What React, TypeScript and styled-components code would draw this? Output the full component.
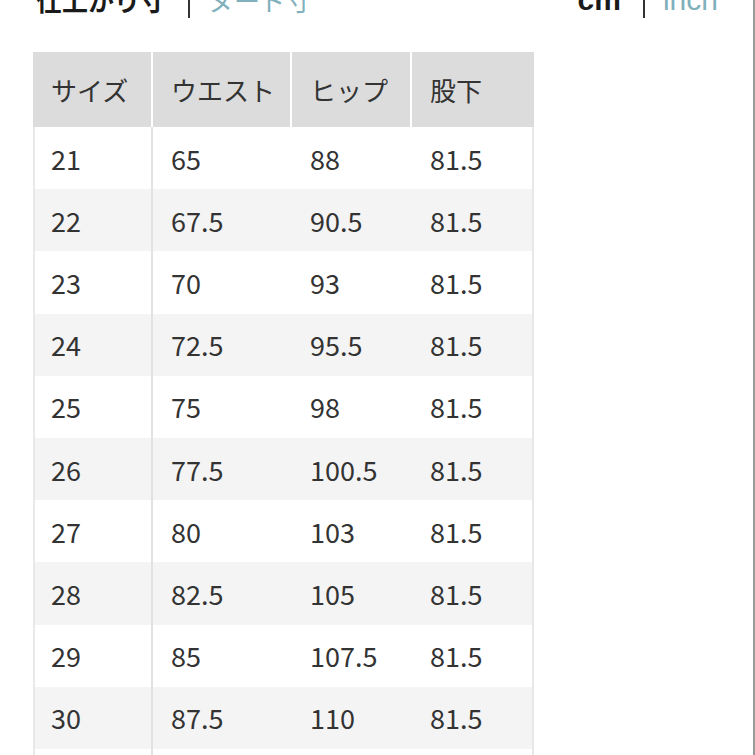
import styled, { createGlobalStyle } from "styled-components";

const GlobalStyle = createGlobalStyle`
  html, body {
    margin: 0;
    padding: 0;
    background: #ffffff;
    overflow: hidden;
  }
  body {
    font-family: "Noto Sans CJK JP", "Noto Sans", sans-serif;
    color: #333333;
  }
`;

const rows = [
  ["21", "65", "88", "81.5"],
  ["22", "67.5", "90.5", "81.5"],
  ["23", "70", "93", "81.5"],
  ["24", "72.5", "95.5", "81.5"],
  ["25", "75", "98", "81.5"],
  ["26", "77.5", "100.5", "81.5"],
  ["27", "80", "103", "81.5"],
  ["28", "82.5", "105", "81.5"],
  ["29", "85", "107.5", "81.5"],
  ["30", "87.5", "110", "81.5"],
  ["31", "90", "112.5", "81.5"],
];

const headers = ["サイズ", "ウエスト", "ヒップ", "股下"];
const widths = [120, 139, 120, 122];

export default function App() {
  return (
    <Page>
      <GlobalStyle />
      <TopBar>
        <Switch>
          <Active>仕上がり寸</Active>
          <Bar />
          <Link>ヌード寸</Link>
        </Switch>
        <Switch>
          <Active $latin>cm</Active>
          <Bar />
          <Link $latin>inch</Link>
        </Switch>
      </TopBar>
      <Table>
        <colgroup>
          {widths.map((w, i) => (
            <col key={i} style={{ width: w }} />
          ))}
        </colgroup>
        <thead>
          <tr>
            {headers.map((h) => (
              <Th key={h}>{h}</Th>
            ))}
          </tr>
        </thead>
        <tbody>
          {rows.map((r, i) => (
            <Row key={r[0]} $striped={i % 2 === 1}>
              {r.map((v, j) => (
                <Td key={j}>{v}</Td>
              ))}
            </Row>
          ))}
        </tbody>
      </Table>
    </Page>
  );
}

const Page = styled.div`
  width: 753px;
  height: 755px;
  border-right: 2px solid #9a9a9a;
  overflow: hidden;
`;

const TopBar = styled.div`
  display: flex;
  justify-content: space-between;
  align-items: flex-start;
  height: 28px;
  margin-top: -14px;
  padding: 0 35px 0 36px;
`;

const Switch = styled.div`
  display: flex;
  align-items: flex-start;
  line-height: 28px;
`;

const Active = styled.span<{ $latin?: boolean }>`
  font-size: ${(p) => (p.$latin ? "30px" : "26px")};
  font-weight: 700;
  color: #1a1a1a;
  font-family: ${(p) =>
    p.$latin ? '"Liberation Sans", sans-serif' : '"Noto Sans CJK JP", sans-serif'};
`;

/* thin divider between the two options, drops a little below the text */
const Bar = styled.span`
  width: 2px;
  height: 32px;
  margin: 0 18px 0 22px;
  background: #333333;
`;

const Link = styled.span<{ $latin?: boolean }>`
  font-size: ${(p) => (p.$latin ? "30px" : "26px")};
  color: #7fb0bb;
  font-family: ${(p) =>
    p.$latin ? '"Liberation Sans", sans-serif' : '"Noto Sans CJK JP", sans-serif'};
`;

const Table = styled.table`
  margin: 38px 0 0 33px;
  width: 501px;
  table-layout: fixed;
  border-collapse: separate;
  border-spacing: 0;
`;

const Th = styled.th`
  height: 75px;
  padding: 0 0 0 18px;
  box-sizing: border-box;
  background: #dcdcdc;
  border-right: 2px solid #ffffff;
  text-align: left;
  font-size: 26px;
  font-weight: 400;
  color: #333333;
  &:last-child {
    border-right: none;
  }
`;

const Row = styled.tr<{ $striped: boolean }>`
  background: ${(p) => (p.$striped ? "#f4f4f4" : "#ffffff")};
`;

const Td = styled.td`
  height: 62.2px;
  padding: 0 0 0 18px;
  box-sizing: border-box;
  font-size: 27px;
  color: #333333;
  line-height: 1;
  &:first-child {
    border-left: 2px solid #e8e8e8;
    border-right: 2px solid #e2e2e2;
    padding-left: 16px;
  }
  &:last-child {
    border-right: 2px solid #e8e8e8;
  }
`;
